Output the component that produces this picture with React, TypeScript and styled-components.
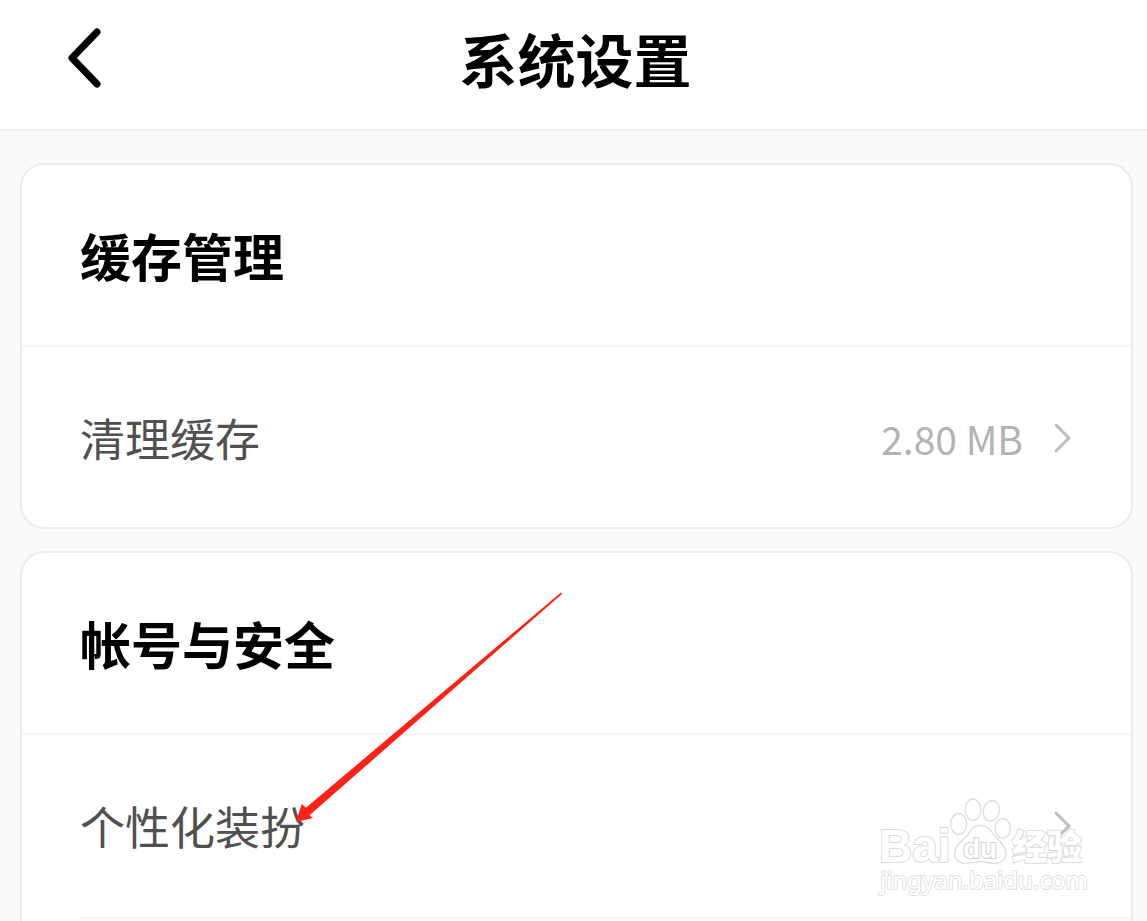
import React from "react";
import styled, { createGlobalStyle } from "styled-components";

const GlobalStyle = createGlobalStyle`
  * { box-sizing: border-box; }
  body {
    margin: 0;
    background: #fafafa;
    font-family: "Noto Sans CJK SC", sans-serif;
  }
  h1, h2, p { margin: 0; }
`;

const Page = styled.div`
  position: relative;
  display: flex;
  flex-direction: column;
  height: 100vh;
  overflow: hidden;
`;

const Header = styled.header`
  display: grid;
  grid-template-columns: 120px 1fr 116px;
  align-items: center;
  flex: none;
  height: 131px;
  padding: 0 0 14px;
  background: #fff;
  border-bottom: 2px solid #efefef;
`;

const BackButton = styled.button`
  display: flex;
  justify-self: start;
  margin-left: 64px;
  padding: 0;
  border: 0;
  background: none;
  cursor: pointer;
`;

const Title = styled.h1`
  font-size: 58px;
  line-height: 80px;
  font-weight: 700;
  text-align: center;
  color: #000;
`;

const Content = styled.main`
  display: flex;
  flex-direction: column;
  flex: 1;
  min-height: 0;
  gap: 22px;
  padding: 32px 14px 0 20px;
`;

const Card = styled.section<{ $open?: boolean }>`
  flex: ${(p) => (p.$open ? "1" : "none")};
  background: #fff;
  border: 2px solid #ececec;
  border-bottom-width: ${(p) => (p.$open ? "0" : "2px")};
  border-radius: ${(p) => (p.$open ? "24px 24px 0 0" : "24px")};
`;

const CardTitle = styled.h2`
  display: flex;
  align-items: center;
  height: 182px;
  padding: 0 58px;
  border-bottom: 2px solid #f5f5f5;
  font-size: 51px;
  line-height: 72px;
  font-weight: 700;
  color: #000;
`;

const Row = styled.button`
  display: flex;
  align-items: center;
  width: 100%;
  height: 180px;
  padding: 2px 60px 0 58px;
  border: 0;
  background: none;
  font: inherit;
  font-size: 45px;
  line-height: 64px;
  text-align: left;
  color: #505050;
  cursor: pointer;
`;

const RowLabel = styled.span`
  flex: 1;
`;

const RowValue = styled.span`
  margin-right: 30px;
  font-size: 39px;
  color: #b3b3b3;
`;

const RowDivider = styled.hr`
  height: 2px;
  margin: 2px 0 0 58px;
  border: 0;
  background: #f5f5f5;
`;

const Arrow = styled.svg`
  position: absolute;
  left: 290px;
  top: 588px;
  pointer-events: none;
`;

const Watermark = styled.svg`
  position: absolute;
  right: 55px;
  top: 794px;
  pointer-events: none;

  text {
    paint-order: stroke;
  }
`;

const Chevron = () => (
  <svg width="18" height="30" viewBox="0 0 18 30" fill="none" aria-hidden="true">
    <path d="M3 2 L16 15 L3 28" stroke="#bdbdbd" strokeWidth="3" strokeLinecap="round" />
  </svg>
);

export default function App() {
  return (
    <Page>
      <GlobalStyle />
      <Header>
        <BackButton aria-label="返回">
          <svg width="40" height="64" viewBox="0 0 40 64" fill="none">
            <path
              d="M33 6 L8 32 L33 58"
              stroke="#000"
              strokeWidth="7"
              strokeLinecap="round"
              strokeLinejoin="round"
            />
          </svg>
        </BackButton>
        <Title>系统设置</Title>
      </Header>
      <Content>
        <Card>
          <CardTitle>缓存管理</CardTitle>
          <Row>
            <RowLabel>清理缓存</RowLabel>
            <RowValue>2.80 MB</RowValue>
            <Chevron />
          </Row>
        </Card>
        <Card $open>
          <CardTitle>帐号与安全</CardTitle>
          <Row>
            <RowLabel>个性化装扮</RowLabel>
            <Chevron />
          </Row>
          <RowDivider />
        </Card>
      </Content>
      <Arrow width="276" height="240" viewBox="0 0 276 240" aria-hidden="true">
        <path
          d="M6 234 L11.7 216 L16 219.7 L271 4.5 L272.2 5.8 L19.5 227.3 L23 230 Z"
          fill="#ff2116"
        />
      </Arrow>
      <Watermark width="216" height="108" viewBox="0 0 216 108">
        <g fill="#fff" stroke="#dcdcdc" strokeWidth="1.3">
          <ellipse cx="82.7" cy="30" rx="8" ry="10.3" />
          <ellipse cx="97" cy="15.7" rx="7.7" ry="10.7" />
          <ellipse cx="115.3" cy="16.7" rx="8" ry="10.3" transform="rotate(14 115.3 16.7)" />
          <ellipse cx="126.7" cy="34.3" rx="7.7" ry="10" />
          <path d="M104.7 31.3 C98 31.3 95 35.5 92 40.5 C88 46.5 78.7 50 78.7 59.5 C78.7 66.5 84 69.5 90 69.3 C96 69 99 67.7 104.7 67.7 C110 67.7 113 69.6 119 69.3 C126 69 130 65.5 130 58.5 C130 51 121.5 46.5 117.5 40.5 C114 35.5 111 31.3 104.7 31.3 Z" />
          <g fontFamily="Liberation Sans, sans-serif" fontWeight="700" strokeWidth="2">
            <text x="3" y="68" fontSize="46">Bai</text>
            <text x="87" y="64" fontSize="28" stroke="#cfcfcf">du</text>
          </g>
          <text
            x="136"
            y="66"
            fontSize="35"
            fontWeight="900"
            strokeWidth="2"
            fontFamily="Noto Sans CJK SC, sans-serif"
          >
            经验
          </text>
          <text x="4" y="95" fontSize="24" fontFamily="Noto Sans, sans-serif" strokeWidth="2" stroke="#e2e2e2">
            jingyan.baidu.com
          </text>
        </g>
      </Watermark>
    </Page>
  );
}
